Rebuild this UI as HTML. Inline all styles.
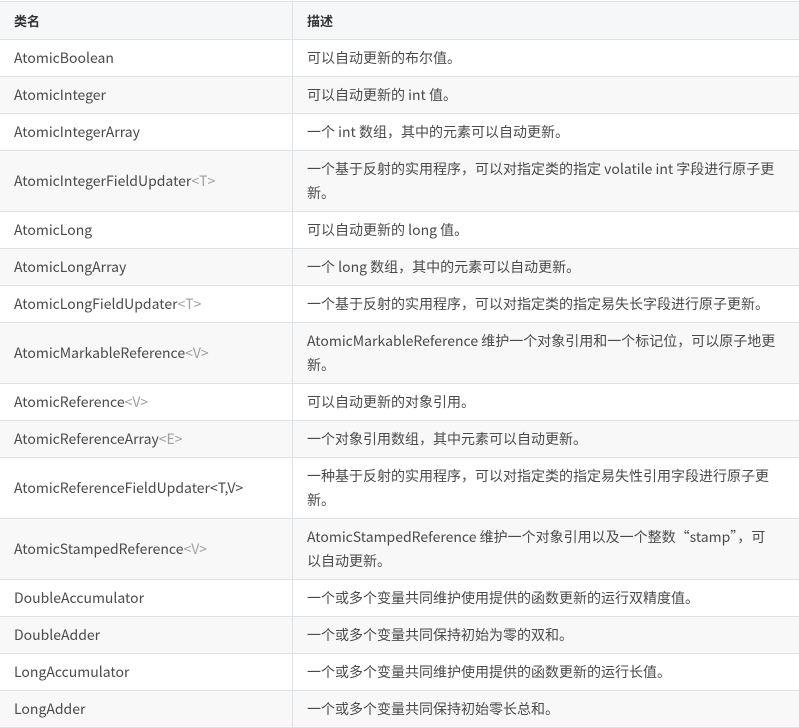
<!DOCTYPE html>
<html><head><meta charset="utf-8"><style>
html,body{margin:0;padding:0;background:#fff;}
table{border-collapse:collapse;width:801px;margin:0;position:absolute;left:-1px;top:1px;table-layout:fixed;
font-family:"Noto Sans CJK SC","Liberation Sans",sans-serif;font-size:14px;color:#4a4a4a;}
td,th{border:1px solid #dfe2e5;padding:0 16px 0 14px;text-align:left;vertical-align:middle;line-height:24px;}
th{font-weight:bold;color:#333;background:#f6f7f9;height:37px;font-size:13px;}
tr td{height:36px;}
tr.t td{height:60px;}
tbody tr:nth-child(even) td{background:#f8f8f8;}
.g{color:#a0a0a0;}
col.a{width:293px;}
</style></head><body>
<table>
<colgroup><col class="a"><col></colgroup>
<thead><tr><th>类名</th><th>描述</th></tr></thead>
<tbody>
<tr><td>AtomicBoolean</td><td>可以自动更新的布尔值。</td></tr>
<tr><td>AtomicInteger</td><td>可以自动更新的 int 值。</td></tr>
<tr><td>AtomicIntegerArray</td><td>一个 int 数组，其中的元素可以自动更新。</td></tr>
<tr class="t"><td>AtomicIntegerFieldUpdater<span class="g">&lt;T&gt;</span></td><td>一个基于反射的实用程序，可以对指定类的指定 volatile int 字段进行原子更<br>新。</td></tr>
<tr><td>AtomicLong</td><td>可以自动更新的 long 值。</td></tr>
<tr><td>AtomicLongArray</td><td>一个 long 数组，其中的元素可以自动更新。</td></tr>
<tr><td>AtomicLongFieldUpdater<span class="g">&lt;T&gt;</span></td><td>一个基于反射的实用程序，可以对指定类的指定易失长字段进行原子更新。</td></tr>
<tr class="t"><td>AtomicMarkableReference<span class="g">&lt;V&gt;</span></td><td>AtomicMarkableReference 维护一个对象引用和一个标记位，可以原子地更<br>新。</td></tr>
<tr><td>AtomicReference<span class="g">&lt;V&gt;</span></td><td>可以自动更新的对象引用。</td></tr>
<tr><td>AtomicReferenceArray<span class="g">&lt;E&gt;</span></td><td>一个对象引用数组，其中元素可以自动更新。</td></tr>
<tr class="t"><td>AtomicReferenceFieldUpdater&lt;T,V&gt;</td><td>一种基于反射的实用程序，可以对指定类的指定易失性引用字段进行原子更<br>新。</td></tr>
<tr class="t"><td>AtomicStampedReference<span class="g">&lt;V&gt;</span></td><td>AtomicStampedReference 维护一个对象引用以及一个整数“stamp”，可<br>以自动更新。</td></tr>
<tr><td>DoubleAccumulator</td><td>一个或多个变量共同维护使用提供的函数更新的运行双精度值。</td></tr>
<tr><td>DoubleAdder</td><td>一个或多个变量共同保持初始为零的双和。</td></tr>
<tr><td>LongAccumulator</td><td>一个或多个变量共同维护使用提供的函数更新的运行长值。</td></tr>
<tr><td>LongAdder</td><td>一个或多个变量共同保持初始零长总和。</td></tr>
</tbody></table>
</body></html>
